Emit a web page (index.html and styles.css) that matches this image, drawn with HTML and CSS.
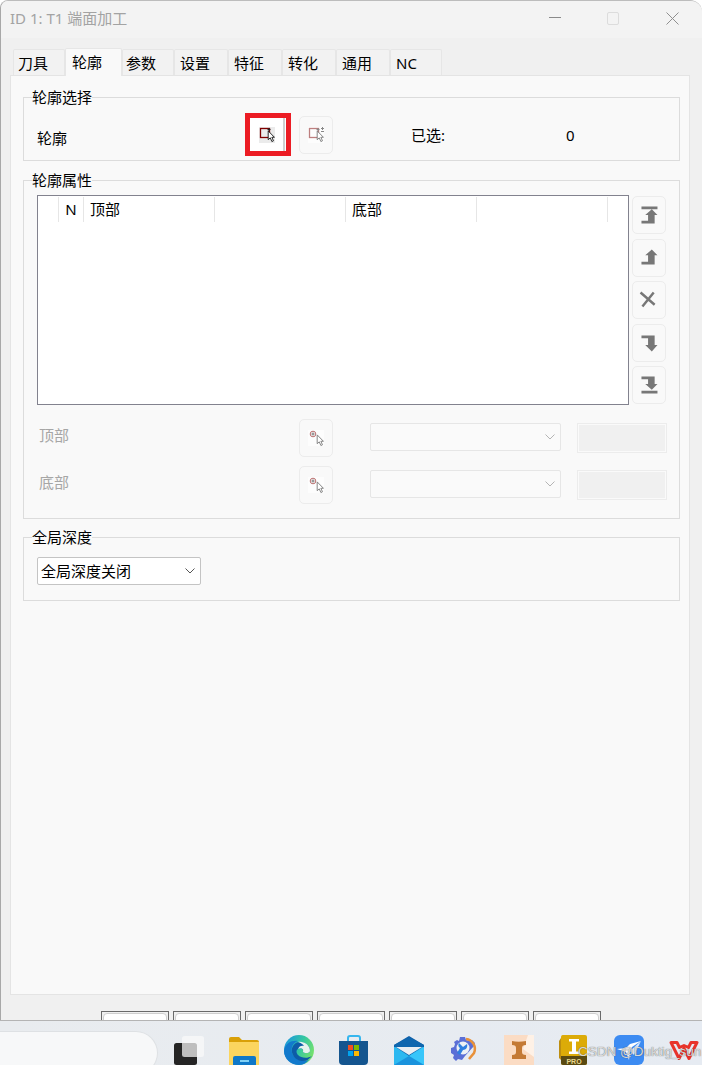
FILE: index.html
```html
<!DOCTYPE html>
<html lang="zh">
<head>
<meta charset="utf-8">
<title>ID 1: T1 端面加工</title>
<link rel="stylesheet" href="styles.css">
</head>
<body>
<svg class="sprite" width="0" height="0" aria-hidden="true">
  <defs>
    <symbol id="cursor" viewBox="0 0 10 16">
      <path d="M1.5 1v11l2.600-2.300 2 4.600 2-.9-2-4.400h3.200z" fill="#fff" stroke="currentColor" stroke-width="1.100"/>
    </symbol>
    <symbol id="chev" viewBox="0 0 10 6">
      <path d="M.5.5 5 5 9.500.5" fill="none" stroke="currentColor"/>
    </symbol>
  </defs>
</svg>
<div class="window">
  <header class="titlebar">
    <span class="title">ID 1: T1 端面加工</span>
    <svg class="winctl" width="130" height="16" viewBox="0 0 130 16"><path d="M0 5.500h12" stroke="#8a8a8a"/><rect x="58.500" y="0.500" width="11" height="12" rx="1.500" fill="none" stroke="#dcdcdc"/><path d="M117.500 .5l12 12m0-12l-12 12" stroke="#8f8f8f" fill="none"/></svg>
  </header>
  <nav class="tabs">
    <div class="tab tab-first">刀具</div>
    <div class="tab tab-active">轮廓</div>
    <div class="tab tab-third">参数</div>
    <div class="tab">设置</div>
    <div class="tab">特征</div>
    <div class="tab">转化</div>
    <div class="tab">通用</div>
    <div class="tab tab-last">NC</div>
  </nav>
  <main class="panel">
    <section class="group group-select">
      <div class="legend">轮廓选择</div>
      <div class="select-row">
        <span class="row-label">轮廓</span>
        <button class="pick-active" type="button">
          <span class="icon-plate">
            <svg width="17" height="17" viewBox="0 0 17 17"><rect x="1.500" y="1.500" width="9" height="9" fill="none" stroke="#800000" stroke-width="1.300"/><path d="M10 1v3M8.500 2.500h3" stroke="#222"/><use href="#cursor" x="8" y="3" width="8" height="13" color="#111"/></svg>
          </span>
        </button>
        <button class="ibtn" type="button">
          <span class="icon-plate icon-plate-light">
            <svg width="17" height="17" viewBox="0 0 17 17"><rect x="1.500" y="1.500" width="9" height="9" fill="none" stroke="#bd7f7f" stroke-width="1.300"/><path d="M10 1v3M8.500 2.500h3M13 1.500h3M14.500 0v3M13 4.500h3" stroke="#888"/><use href="#cursor" x="8" y="3" width="8" height="13" color="#777"/></svg>
          </span>
        </button>
        <span class="sel-label">已选:</span>
        <span class="sel-count">0</span>
      </div>
    </section>

    <section class="group group-props">
      <div class="legend">轮廓属性</div>
      <div class="list-row">
        <div class="list">
          <div class="list-head">
            <div class="col"></div>
            <div class="col col-n">N</div>
            <div class="col">顶部</div>
            <div class="col"></div>
            <div class="col">底部</div>
            <div class="col"></div>
          </div>
        </div>
        <div class="side">
          <button class="ibtn" type="button"><svg width="34" height="36" viewBox="0 0 34 36"><path class="g" d="M9 9h17v3H9zM20 12l6 6h-3v9H9v-3h7v-6h-3z"/></svg></button>
          <button class="ibtn" type="button"><svg width="34" height="36" viewBox="0 0 34 36"><path class="g" d="M20 9l6 6h-3v10H9v-3h7v-7h-3z"/></svg></button>
          <button class="ibtn" type="button"><svg width="34" height="36" viewBox="0 0 34 36"><path d="M8 10l15 13M22 10L10 25" stroke="#777" stroke-width="2.600" fill="none"/></svg></button>
          <button class="ibtn" type="button"><svg width="34" height="36" viewBox="0 0 34 36"><path class="g" d="M9 10h14v10h3l-6 7-7-7h3v-7H9z"/></svg></button>
          <button class="ibtn" type="button"><svg width="34" height="36" viewBox="0 0 34 36"><path class="g" d="M9 9h14v8h3l-6 6-7-6h3v-5H9zM9 24h17v3H9z"/></svg></button>
        </div>
      </div>
      <div class="depth-row">
        <span class="depth-label">顶部</span>
        <button class="ibtn" type="button">
          <span class="icon-plate icon-plate-light">
            <svg width="17" height="17" viewBox="0 0 17 17"><circle cx="5" cy="4" r="2.800" fill="none" stroke="#b96f6f"/><path d="M3.400 4h3.200M5 2.400v3.200" stroke="#777"/><use href="#cursor" x="8" y="4" width="8" height="13" color="#777"/></svg>
          </span>
        </button>
        <div class="dd dd-off"><svg class="chev" width="10" height="6"><use href="#chev"/></svg></div>
        <div class="field-off"></div>
      </div>
      <div class="depth-row depth-row-next">
        <span class="depth-label">底部</span>
        <button class="ibtn" type="button">
          <span class="icon-plate icon-plate-light">
            <svg width="17" height="17" viewBox="0 0 17 17"><circle cx="5" cy="4" r="2.800" fill="none" stroke="#b96f6f"/><path d="M3.400 4h3.200M5 2.400v3.200" stroke="#777"/><use href="#cursor" x="8" y="4" width="8" height="13" color="#777"/></svg>
          </span>
        </button>
        <div class="dd dd-off"><svg class="chev" width="10" height="6"><use href="#chev"/></svg></div>
        <div class="field-off"></div>
      </div>
    </section>

    <section class="group group-global">
      <div class="legend">全局深度</div>
      <div class="dd dd-on"><span>全局深度关闭</span><svg class="chev" width="10" height="6"><use href="#chev"/></svg></div>
    </section>
  </main>
  <div class="actions">
    <div class="act"><i></i></div><div class="act"><i></i></div><div class="act"><i></i></div><div class="act"><i></i></div><div class="act"><i></i></div><div class="act"><i></i></div><div class="act"><i></i></div>
  </div>
</div>
<footer class="taskbar">
  <div class="search"></div>
  <div class="apps">
    <svg class="app" viewBox="0 0 30 30"><rect x="0" y="8" width="23" height="22" rx="2.500" fill="#242424"/><rect x="8" y="1" width="22" height="21" rx="2.500" fill="#fafafa" fill-opacity=".72"/></svg>
    <svg class="app" viewBox="0 0 30 30"><path d="M0 4a2 2 0 0 1 2-2h8l3 3h15a2 2 0 0 1 2 2v3H0z" fill="#d9a008"/><path d="M0 7h30v23H0z" fill="#fbd55f"/><path d="M4 23a2 2 0 0 1 2-2h19a2 2 0 0 1 2 2v7H4z" fill="#0f78c8"/><path d="M11 25h9v2h-9z" fill="#7fd0f5"/></svg>
    <svg class="app" viewBox="0 0 30 30"><defs><linearGradient id="edgeG" x1="0" y1=".2" x2="1" y2=".6"><stop offset="0" stop-color="#1a96e0"/><stop offset=".55" stop-color="#35c8a0"/><stop offset="1" stop-color="#78e26c"/></linearGradient></defs><circle cx="15" cy="15" r="15" fill="url(#edgeG)"/><path d="M0 16C1 8 8 5 14 6c-6 2-8 8-5 14 3 5 10 7 16 5-3 3-6 5-10 5C7 30 0 24 0 16z" fill="#1279cc"/><path d="M9 20c-3-6 0-12 6-13 6 0 11 3 11 9 0 2-5 3-7 1 1-3-3-5-5-3-2 1-2 4 0 6 3 3 9 4 14 1-3 3-5 5-9 5-4 0-8-2-10-6z" fill="#0d5ba8"/><path d="M14 7c6-1 12 3 12 9 0 2-5 3-7 1 1-3-2-5-5-3 1-3 4-4 6-3-1-2-3-3-6-4z" fill="#e8f3ee"/></svg>
    <svg class="app" viewBox="0 0 30 30"><path d="M9 6V3a2 2 0 0 1 2-2h8a2 2 0 0 1 2 2v3" fill="none" stroke="#36b6ee" stroke-width="2"/><path d="M0 6h29v20a4 4 0 0 1-4 4H4a4 4 0 0 1-4-4z" fill="#14558f"/><path d="M9 10h5v5H9z" fill="#f25022"/><path d="M15 10h5v5h-5z" fill="#7fba00"/><path d="M9 16h5v5H9z" fill="#00a4ef"/><path d="M15 16h5v5h-5z" fill="#ffb900"/></svg>
    <svg class="app" viewBox="0 0 30 30"><path d="M0 10L15 1l15 9v20H0z" fill="#0d5fa8"/><path d="M0 12h30v18H0z" fill="#2cb8f0"/><path d="M0 11l15 10 15-10v-1L15 2 0 10z" fill="#0f66ae"/><path d="M2 12h26L15 20z" fill="#e9eef2"/><path d="M15 21L30 12v18z" fill="#38c6fa"/><path d="M0 30l15-9 15 9z" fill="#1a93dd"/></svg>
    <svg class="app" viewBox="0 0 30 30"><path d="M11 2h5l1 3 4 1 2-1 3 3-1 3-9 10-3 4-4-1-2 2-3-3 1-3-3-2v-5l3-1 1-3-1-2 3-2 2 1z" fill="#5b6fd6"/><circle cx="14" cy="13" r="6.500" fill="#edf1f5"/><path d="M17 4a10 10 0 0 1 8 14l-5 6" fill="none" stroke="#e8913a" stroke-width="2.500"/><path d="M10 8l4 4 4-3c1 3-1 6-4 6l-3 5-3-2 3-5c-2-1-2-4-1-5z" fill="#2f7fe0"/></svg>
    <svg class="app" viewBox="0 0 30 30"><rect width="30" height="30" fill="#fef1e6"/><path d="M0 0h24l-5 14 11 8v8H0z" fill="#fbdcc4"/><path d="M8 6c4 1 9 1 14 0v4c-3 0-4 1-4 3v4c0 2 1 3 4 3v4H8v-4c3 0 4-1 4-3v-4c0-2-1-3-4-3z" fill="#c47a35"/></svg>
    <svg class="app" viewBox="0 0 30 30"><path d="M0 6L4 0v27l-4-4z" fill="#bd8e10"/><rect x="2" width="26" height="30" rx="2" fill="#dcab08"/><path d="M2 21h26v7a2 2 0 0 1-2 2H4a2 2 0 0 1-2-2z" fill="#5a4a12"/><path d="M10 4h10v2.500h-3v10h3V19H10v-2.500h3v-10h-3z" fill="#fff"/><text class="pro" x="15" y="28.500" text-anchor="middle">PRO</text></svg>
    <svg class="app" viewBox="0 0 30 30"><rect width="30" height="30" rx="6" fill="#3c8bf2"/><path d="M27 6L18 12l-2 4-1 9-3-8-9-3 9-1 4-4z" fill="#fff"/><path d="M27 6l-7 14-4-4z" fill="#dcebff"/></svg>
    <svg class="app" viewBox="0 0 30 30"><path d="M2 7.500l8 16 5-10 5 10 8-16h-6l-2.500 5-4.500-2-4.500 2-2.500-5z" fill="none" stroke="#e8332a" stroke-width="3" stroke-linejoin="round"/></svg>
  </div>
  <div class="watermark">CSDN @Duktig_sun</div>
</footer>
</body>
</html>
```

FILE: styles.css
```css
* { box-sizing: border-box; }
html, body { margin: 0; padding: 0; }
body {
  position: relative;
  width: 702px;
  height: 1065px;
  overflow: hidden;
  background: #fff;
  font-family: "Noto Sans", "Noto Sans CJK SC", sans-serif;
  font-size: 15px;
  line-height: 20px;
  color: #000;
}
.sprite { position: absolute; }
button { padding: 0; margin: 0; font: inherit; cursor: default; }

.window {
  height: 1020px;
  overflow: hidden;
  background: #f0f0f0;
  border-top: 1px solid #bcbcbc;
  border-left: 1px solid #a8a8a8;
  border-top-left-radius: 8px;
  border-top-right-radius: 12px;
}
.titlebar {
  height: 37px;
  display: flex;
  align-items: center;
  justify-content: space-between;
  padding: 0 23px 3px 9px;
  background: #f3f3f3;
}
.title { color: #a3a3a3; }
.winctl { margin-top: 4px; }

.tabs {
  height: 38px;
  padding: 10px 0 0 12px;
  display: flex;
  align-items: flex-end;
  position: relative;
  z-index: 1;
  margin-bottom: -1px;
}
.tab {
  width: 54px;
  height: 26px;
  padding: 3px 0 0 5px;
  margin-bottom: 1px;
  border: 1px solid #e6e6e6;
  border-bottom: 0;
  border-radius: 2px 2px 0 0;
  background: #f2f2f2;
}
.tab-first { width: 52px; padding-left: 4px; }
.tab-third { width: 52px; padding-left: 3px; }
.tab-last { width: 52px; }
.tab-active {
  width: 57px;
  height: 28px;
  margin-bottom: 0;
  padding: 3px 0 0 6px;
  background: #f9f9f9;
}

.panel {
  height: 920px;
  margin: 0 12px 0 9px;
  padding: 21px 9px 0 12px;
  background: #f9f9f9;
  border: 1px solid #e4e4e4;
}
.group { border: 1px solid #dcdcdc; }
.legend {
  width: fit-content;
  margin: -11px 0 0 8px;
  background: #f9f9f9;
}

.group-select { height: 64px; }
.select-row {
  height: 43px;
  margin-top: 6px;
  padding-left: 13px;
  display: flex;
  align-items: center;
}
.row-label { width: 208px; padding-top: 7px; }
.pick-active {
  width: 46px;
  height: 43px;
  padding-right: 2px;
  display: flex;
  align-items: center;
  justify-content: center;
  border: 5px solid #ec1c24;
  background: #fff;
  box-shadow: inset -1px 0 0 #fff, inset -3px 0 0 #cfcfcf;
}
.ibtn {
  width: 34px;
  height: 38px;
  display: flex;
  align-items: center;
  justify-content: center;
  border: 1px solid #ececec;
  border-radius: 5px;
  background: #f9f9f9;
}
.select-row .ibtn { margin-left: 8px; }
.icon-plate {
  width: 16px;
  height: 16px;
  display: block;
  background: #ebebeb;
}
.icon-plate-light { background: #fdfdfd; }
.icon-plate svg { display: block; }
.sel-label { width: 155px; margin-left: 78px; }

.group-props { height: 339px; margin-top: 19px; }
.list-row {
  margin-top: 5px;
  padding-left: 13px;
  display: flex;
  align-items: flex-start;
}
.list {
  width: 592px;
  height: 210px;
  background: #fff;
  border: 1px solid #82828e;
}
.list-head {
  height: 25px;
  margin-top: 1px;
  display: grid;
  grid-template-columns: 21px 25px 131px 131px 131px 131px;
}
.col {
  padding: 2px 0 0 6px;
  border-right: 1px solid #e6e6e6;
}
.col-n { padding-left: 0; text-align: center; }
.side {
  width: 34px;
  height: 208px;
  margin: 1px 0 0 3px;
  display: flex;
  flex-direction: column;
  justify-content: space-between;
}
.g { fill: #777; }

.depth-row {
  height: 38px;
  margin-top: 14px;
  display: flex;
  align-items: flex-start;
}
.depth-row-next { margin-top: 9px; }
.depth-label {
  width: 275px;
  padding: 6px 0 0 15px;
  color: #a6a6a6;
}
.dd {
  height: 28px;
  display: flex;
  align-items: center;
  justify-content: space-between;
  border-radius: 2px;
}
.dd-off {
  width: 191px;
  margin: 4px 0 0 37px;
  padding-right: 5px;
  justify-content: flex-end;
  background: #fafafa;
  border: 1px solid #e6e6e6;
  color: #b4b4b4;
}
.field-off {
  width: 90px;
  height: 30px;
  margin: 4px 0 0 16px;
  background: #f0f0f0;
  border: 1px solid #ececec;
  box-shadow: inset 0 0 0 1px #fafafa;
}

.group-global { height: 64px; margin-top: 18px; }
.dd-on {
  width: 164px;
  margin: 10px 0 0 13px;
  padding: 0 5px 0 3px;
  background: #fff;
  border: 1px solid #c4c4c4;
  color: #000;
}
.dd-on .chev { color: #555; }

.actions {
  margin-top: 16px;
  padding-left: 100px;
  display: flex;
  gap: 4px;
}
.act {
  width: 68px;
  height: 24px;
  padding: 1px;
  border: 1px solid #6a6a6a;
}
.act i {
  display: block;
  height: 100%;
  background: #fff;
  border: 1px solid #cfcfcf;
  border-radius: 4px;
}

.taskbar {
  height: 45px;
  display: flex;
  align-items: flex-start;
  overflow: hidden;
  background: linear-gradient(90deg, #e9ecef, #e6ebf2);
  border-top: 1px solid #b4b4b4;
}
.search {
  width: 158px;
  height: 44px;
  margin-top: 10px;
  background: #f7f8f9;
  border: 1px solid #dee1e4;
  border-left: 0;
  border-radius: 0 24px 24px 0;
}
.apps {
  margin: 14px 0 0 16px;
  display: flex;
  gap: 25px;
}
.app { width: 30px; height: 30px; flex: none; }
.pro { font: 700 7px "Liberation Sans", sans-serif; fill: #e8d890; }
.watermark {
  position: absolute;
  left: 578px;
  top: 1043px;
  font: 13.500px/18px "Liberation Sans", sans-serif;
  color: rgba(235, 235, 235, .9);
  text-shadow: 0 0 1px rgba(60, 60, 60, .95);
  white-space: nowrap;
}
```
